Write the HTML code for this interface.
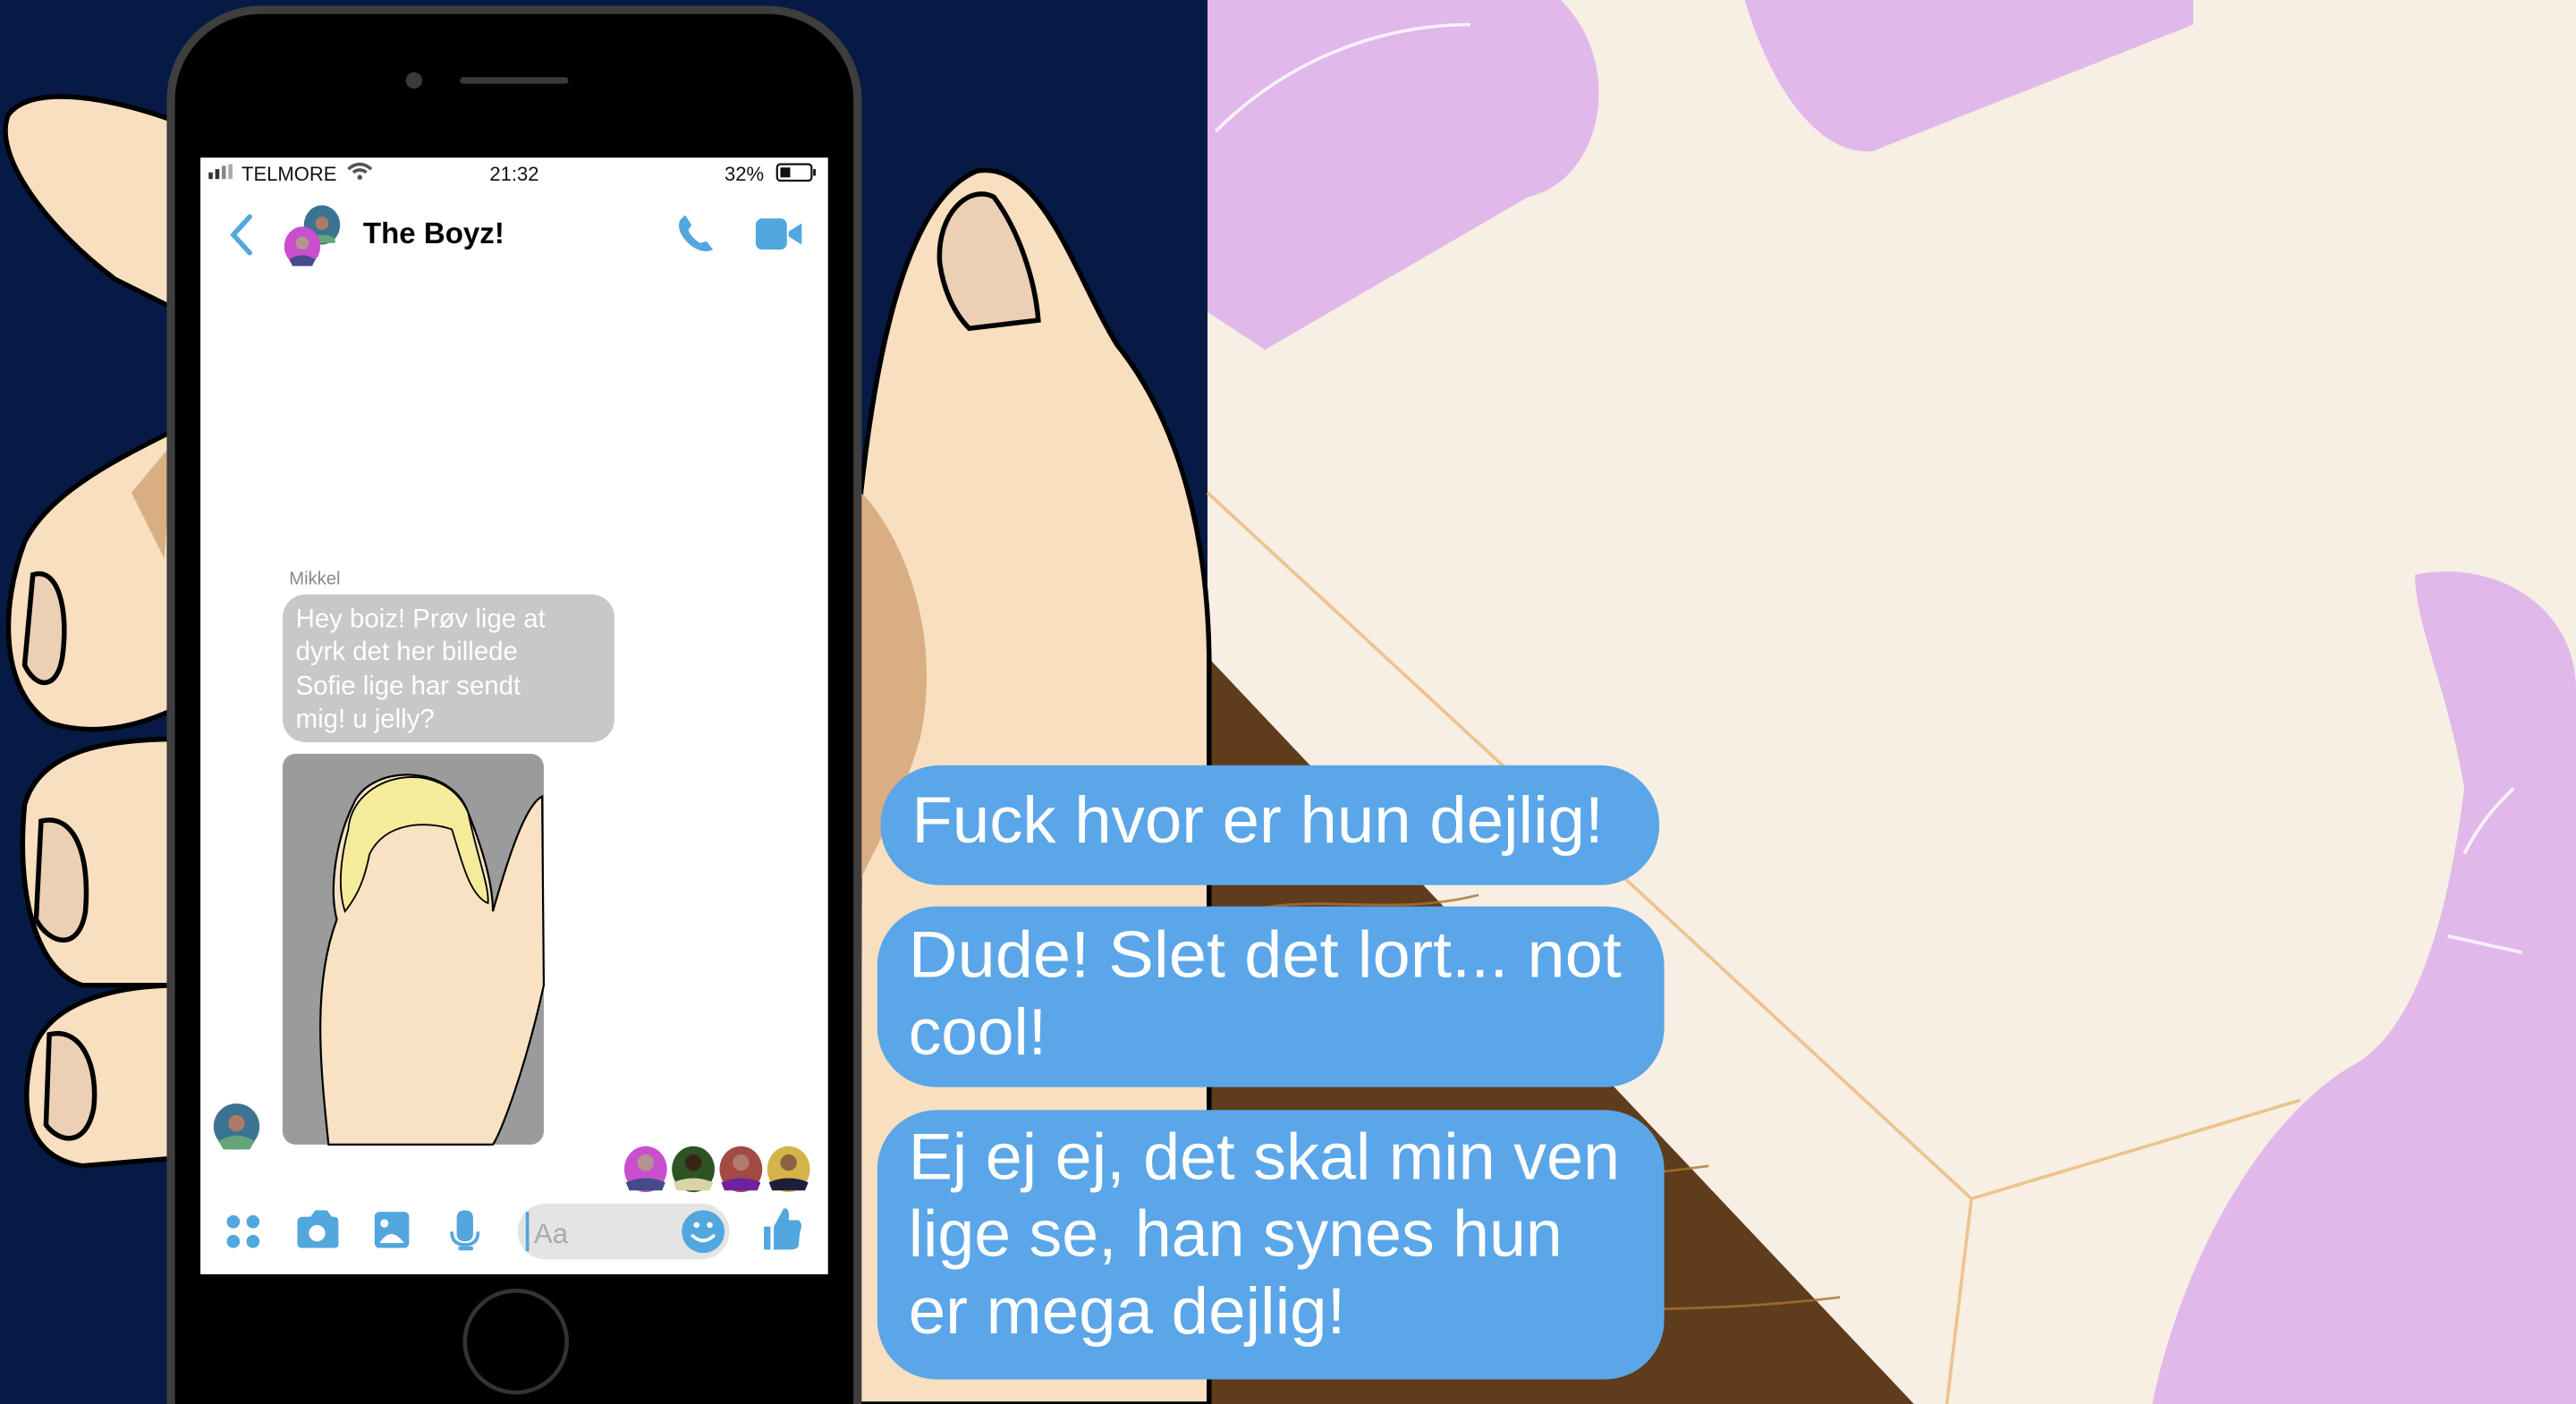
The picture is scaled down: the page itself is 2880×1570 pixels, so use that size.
<!DOCTYPE html>
<html><head><meta charset="utf-8"><style>
html,body{margin:0;padding:0;width:2880px;height:1570px;overflow:hidden;background:#f7eee4}
svg{display:block}
text{font-family:"Liberation Sans","DejaVu Sans",sans-serif}
</style></head><body>
<svg width="2880" height="1570" viewBox="0 0 1568 855" preserveAspectRatio="none" xmlns="http://www.w3.org/2000/svg">
<!-- backgrounds -->
<rect x="0" y="0" width="736" height="855" fill="#061a45"/>
<rect x="735" y="0" width="833" height="855" fill="#f7eee4"/>
<!-- wood -->
<polygon points="735,400 1165,855 735,855" fill="#5e3c1c"/>
<g stroke="#a8742e" stroke-width="1.5" fill="none" opacity="0.8">
<path d="M760,470 C800,460 830,480 870,470"/><path d="M745,560 C790,540 840,560 900,545"/>
<path d="M770,640 C820,620 880,650 960,630"/><path d="M750,720 C820,700 900,730 1040,710"/>
<path d="M760,800 C850,780 950,810 1120,790"/><path d="M745,600 L820,590"/>
</g>
<!-- beige lines -->
<g stroke="#ecc48f" stroke-width="2" fill="none">
<path d="M735,300 L1200,730 L1400,670"/><path d="M1200,730 L1185,855"/>
</g>
<!-- purple shapes -->
<path d="M735,0 L950,0 C990,40 975,110 930,120 L770,213 L735,190 Z" fill="#e1b8ea"/>
<path d="M1062,0 L1335,0 L1335,15 L1140,92 C1110,95 1080,60 1062,0 Z" fill="#e1b8ea"/>
<path d="M1310,855 C1330,760 1380,680 1430,650 C1470,630 1490,560 1500,480 C1490,420 1470,380 1470,350 C1520,340 1568,370 1568,420 L1568,855 Z" fill="#e1b8ea"/>
<g stroke="#fff" stroke-width="2" fill="none" opacity="0.8"><path d="M740,80 C790,30 850,15 895,15"/><path d="M1490,570 L1535,580"/><path d="M1500,520 C1510,500 1520,490 1530,480"/></g>
<!-- thumb -->
<path d="M524,300 C535,200 555,120 595,104 C635,98 655,170 680,210 C720,260 735,330 736,400 L736,855 L522,855 Z" fill="#f7dfc0" stroke="#000" stroke-width="3"/>
<path d="M524,300 C545,320 575,380 560,450 C545,500 530,520 522,540 Z" fill="#d9ae82"/>
<path d="M572,160 C570,130 590,112 605,120 C620,140 630,170 632,195 L590,200 C580,190 574,175 572,160 Z" fill="#ecd0b5" stroke="#000" stroke-width="3"/>
<!-- left fingers -->
<g fill="#f7dfc0" stroke="#000" stroke-width="3">
<path d="M110,75 C70,60 20,50 5,70 C-5,95 30,140 70,170 L110,190 Z"/>
<path d="M110,260 C70,280 30,300 15,330 C0,370 0,420 30,440 C60,450 90,440 110,430 Z"/>
<path d="M110,450 C70,450 25,455 15,490 C10,540 20,590 50,600 L110,600 Z"/>
<path d="M110,600 C70,600 30,610 20,640 C10,680 20,705 50,710 L110,705 Z"/>
</g>
<g fill="#ecd0b5" stroke="#000" stroke-width="3">
<path d="M20,350 C35,345 42,370 38,400 C35,420 22,420 15,405 Z"/>
<path d="M25,500 C45,495 55,520 52,555 C48,580 30,575 22,560 Z"/>
<path d="M30,630 C50,625 60,650 57,675 C52,700 35,695 28,685 Z"/>
</g>
<path d="M105,270 L80,300 L100,340 Z" fill="#d9ae82"/>
<!-- phone -->
<rect x="104" y="6" width="418" height="900" rx="55" fill="#000" stroke="#3e3e3e" stroke-width="5"/>
<circle cx="252" cy="49" r="5" fill="#3a3a3a"/>
<rect x="280" y="47" width="66" height="4" rx="2" fill="#3a3a3a"/>
<circle cx="314" cy="817" r="31" fill="none" stroke="#333" stroke-width="2.5"/>
<rect x="122" y="96" width="382" height="680" fill="#fff"/>
<!-- status -->
<g fill="#333"><rect x="127" y="105" width="2.5" height="4"/><rect x="131" y="103" width="2.5" height="6"/><rect x="135" y="101" width="2.5" height="8" fill="#888"/><rect x="139" y="100" width="2.5" height="9" fill="#aaa"/></g>
<text x="147" y="110" font-size="12" fill="#111">TELMORE</text>
<path d="M212,103 Q219,97 226,103 M215,105 Q219,102 223,105" stroke="#555" stroke-width="2" fill="none"/><circle cx="219" cy="108" r="1.5" fill="#555"/>
<text x="298" y="110" font-size="12" fill="#111">21:32</text>
<text x="441" y="110" font-size="12" fill="#111">32%</text>
<rect x="473" y="100" width="21" height="10" rx="2" fill="none" stroke="#111" stroke-width="1.2"/><rect x="475" y="102" width="6" height="6" fill="#111"/><rect x="495" y="103" width="1.5" height="4" fill="#111"/>
<!-- header -->
<path d="M152,132 L142,143 L152,154" stroke="#52a7de" stroke-width="3" fill="none" stroke-linecap="round"/>
<ellipse cx="196" cy="137" rx="11" ry="12" fill="#3b7490"/><circle cx="196" cy="136" r="4" fill="#b07a6a"/><path d="M188,145 Q196,141 204,145 L204,148 L188,148 Z" fill="#64a57a"/>
<ellipse cx="184" cy="150" rx="11" ry="12" fill="#c94fcf"/><circle cx="184" cy="148" r="4" fill="#b59490"/><path d="M176,158 Q184,153 192,158 L190,162 L178,162 Z" fill="#454a8a"/>
<text x="221" y="148" font-size="18" font-weight="bold" fill="#000">The Boyz!</text>
<path d="M414,134 C412,138 414,144 420,149 C425,153 430,154 434,152 L430,147 L426,148 C423,146 420,143 419,140 L421,137 L417,131 Z" fill="#52a7de"/>
<rect x="460" y="133" width="19" height="19" rx="4" fill="#52a7de"/><path d="M480,141 L488,136 L488,149 L480,144 Z" fill="#52a7de"/>
<!-- message -->
<text x="176" y="356" font-size="11" fill="#888">Mikkel</text>
<rect x="172" y="362" width="202" height="90" rx="14" fill="#c8c8c8"/>
<g font-size="16" fill="#fff"><text x="180" y="382">Hey boiz! Prøv lige at</text><text x="180" y="402">dyrk det her billede</text><text x="180" y="423">Sofie lige har sendt</text><text x="180" y="443">mig! u jelly?</text></g>
<rect x="172" y="459" width="159" height="238" rx="8" fill="#9b9b9b"/>
<path d="M215,490 C225,465 275,465 285,495 C295,520 300,540 300,555 C310,520 320,490 330,485 L331,600 C320,650 305,690 300,697 L200,697 C195,650 190,600 205,560 C200,540 205,510 215,490 Z" fill="#f9e2c4" stroke="#000" stroke-width="1.2"/>
<path d="M212,505 C215,470 270,460 285,495 C290,520 298,540 297,550 C285,545 280,520 275,505 C260,500 235,500 225,520 C222,535 218,545 210,555 C205,540 208,520 212,505 Z" fill="#f4ec9a" stroke="#000" stroke-width="1"/>
<ellipse cx="144" cy="686" rx="14" ry="14" fill="#3b7490"/><circle cx="144" cy="684" r="5" fill="#b07a6a"/><path d="M133,695 Q144,688 155,695 L152,700 L136,700 Z" fill="#64a57a"/>
<!-- read receipts -->
<g>
<ellipse cx="393" cy="712" rx="13" ry="14" fill="#c94fcf"/><circle cx="393" cy="708" r="5" fill="#b59490"/><path d="M381,720 Q393,715 405,720 L403,725 L383,725 Z" fill="#454a8a"/>
<ellipse cx="422" cy="712" rx="13" ry="14" fill="#2e5325"/><circle cx="422" cy="708" r="5" fill="#3a2418"/><path d="M410,720 Q422,715 434,720 L432,725 L412,725 Z" fill="#d8d4a8"/>
<ellipse cx="451" cy="712" rx="13" ry="14" fill="#a34a44"/><circle cx="451" cy="708" r="5" fill="#b07a70"/><path d="M439,720 Q451,715 463,720 L461,725 L441,725 Z" fill="#6d22a0"/>
<ellipse cx="480" cy="712" rx="13" ry="14" fill="#d4b34a"/><circle cx="480" cy="708" r="5" fill="#8a6244"/><path d="M468,720 Q480,715 492,720 L490,725 L470,725 Z" fill="#1c1f38"/>
</g>
<!-- toolbar -->
<g fill="#52a7de">
<circle cx="142" cy="744" r="4"/><circle cx="154" cy="744" r="4"/><circle cx="142" cy="756" r="4"/><circle cx="154" cy="756" r="4"/>
<path d="M181,744 Q181,741 185,741 L189,741 L192,737 L199,737 L202,741 L203,741 Q206,741 206,744 L206,758 Q206,760 203,760 L184,760 Q181,760 181,757 Z"/>
<rect x="228" y="738" width="21" height="22" rx="3"/>
<path d="M283,737 Q288,737 288,742 L288,751 Q288,756 283,756 Q278,756 278,751 L278,742 Q278,737 283,737 Z"/>
<path d="M275,750 Q275,758 283,758 Q291,758 291,750" stroke="#52a7de" stroke-width="2" fill="none"/><rect x="279" y="759" width="9" height="2.5" rx="1"/>
<path d="M465,747 L469,747 L469,761 L465,761 Z M471,747 L477,736 Q481,735 480,743 L486,743 Q489,745 487,750 L486,759 Q485,761 480,761 L471,761 Z"/>
</g>
<circle cx="193" cy="751" r="5" fill="#fff"/>
<path d="M231,757 Q238,746 246,757 Z" fill="#fff"/><circle cx="234" cy="745" r="2.5" fill="#fff"/>
<rect x="315" y="733" width="129" height="34" rx="17" fill="#e4e4e4"/>
<rect x="320" y="738" width="2" height="24" fill="#52a7de"/>
<text x="325" y="757" font-size="17" fill="#aaa">Aa</text>
<circle cx="428" cy="750" r="13" fill="#52a7de"/><circle cx="424" cy="746" r="1.8" fill="#fff"/><circle cx="432" cy="746" r="1.8" fill="#fff"/><path d="M421,752 Q428,759 435,752" stroke="#fff" stroke-width="2" fill="none"/>
<!-- big bubbles -->
<rect x="536" y="466" width="474" height="73" rx="36" fill="#5aa6e8"/>
<text x="555" y="513" font-size="40" fill="#fff" textLength="421" lengthAdjust="spacingAndGlyphs">Fuck hvor er hun dejlig!</text>
<rect x="534" y="552" width="479" height="110" rx="36" fill="#5aa6e8"/>
<text x="553" y="595" font-size="40" fill="#fff" textLength="434" lengthAdjust="spacingAndGlyphs">Dude! Slet det lort... not</text>
<text x="553" y="642" font-size="40" fill="#fff" textLength="84" lengthAdjust="spacingAndGlyphs">cool!</text>
<rect x="534" y="676" width="479" height="164" rx="36" fill="#5aa6e8"/>
<text x="553" y="718" font-size="40" fill="#fff" textLength="433" lengthAdjust="spacingAndGlyphs">Ej ej ej, det skal min ven</text>
<text x="553" y="765" font-size="40" fill="#fff" textLength="398" lengthAdjust="spacingAndGlyphs">lige se, han synes hun</text>
<text x="553" y="812" font-size="40" fill="#fff" textLength="266" lengthAdjust="spacingAndGlyphs">er mega dejlig!</text>
</svg>
</body></html>
